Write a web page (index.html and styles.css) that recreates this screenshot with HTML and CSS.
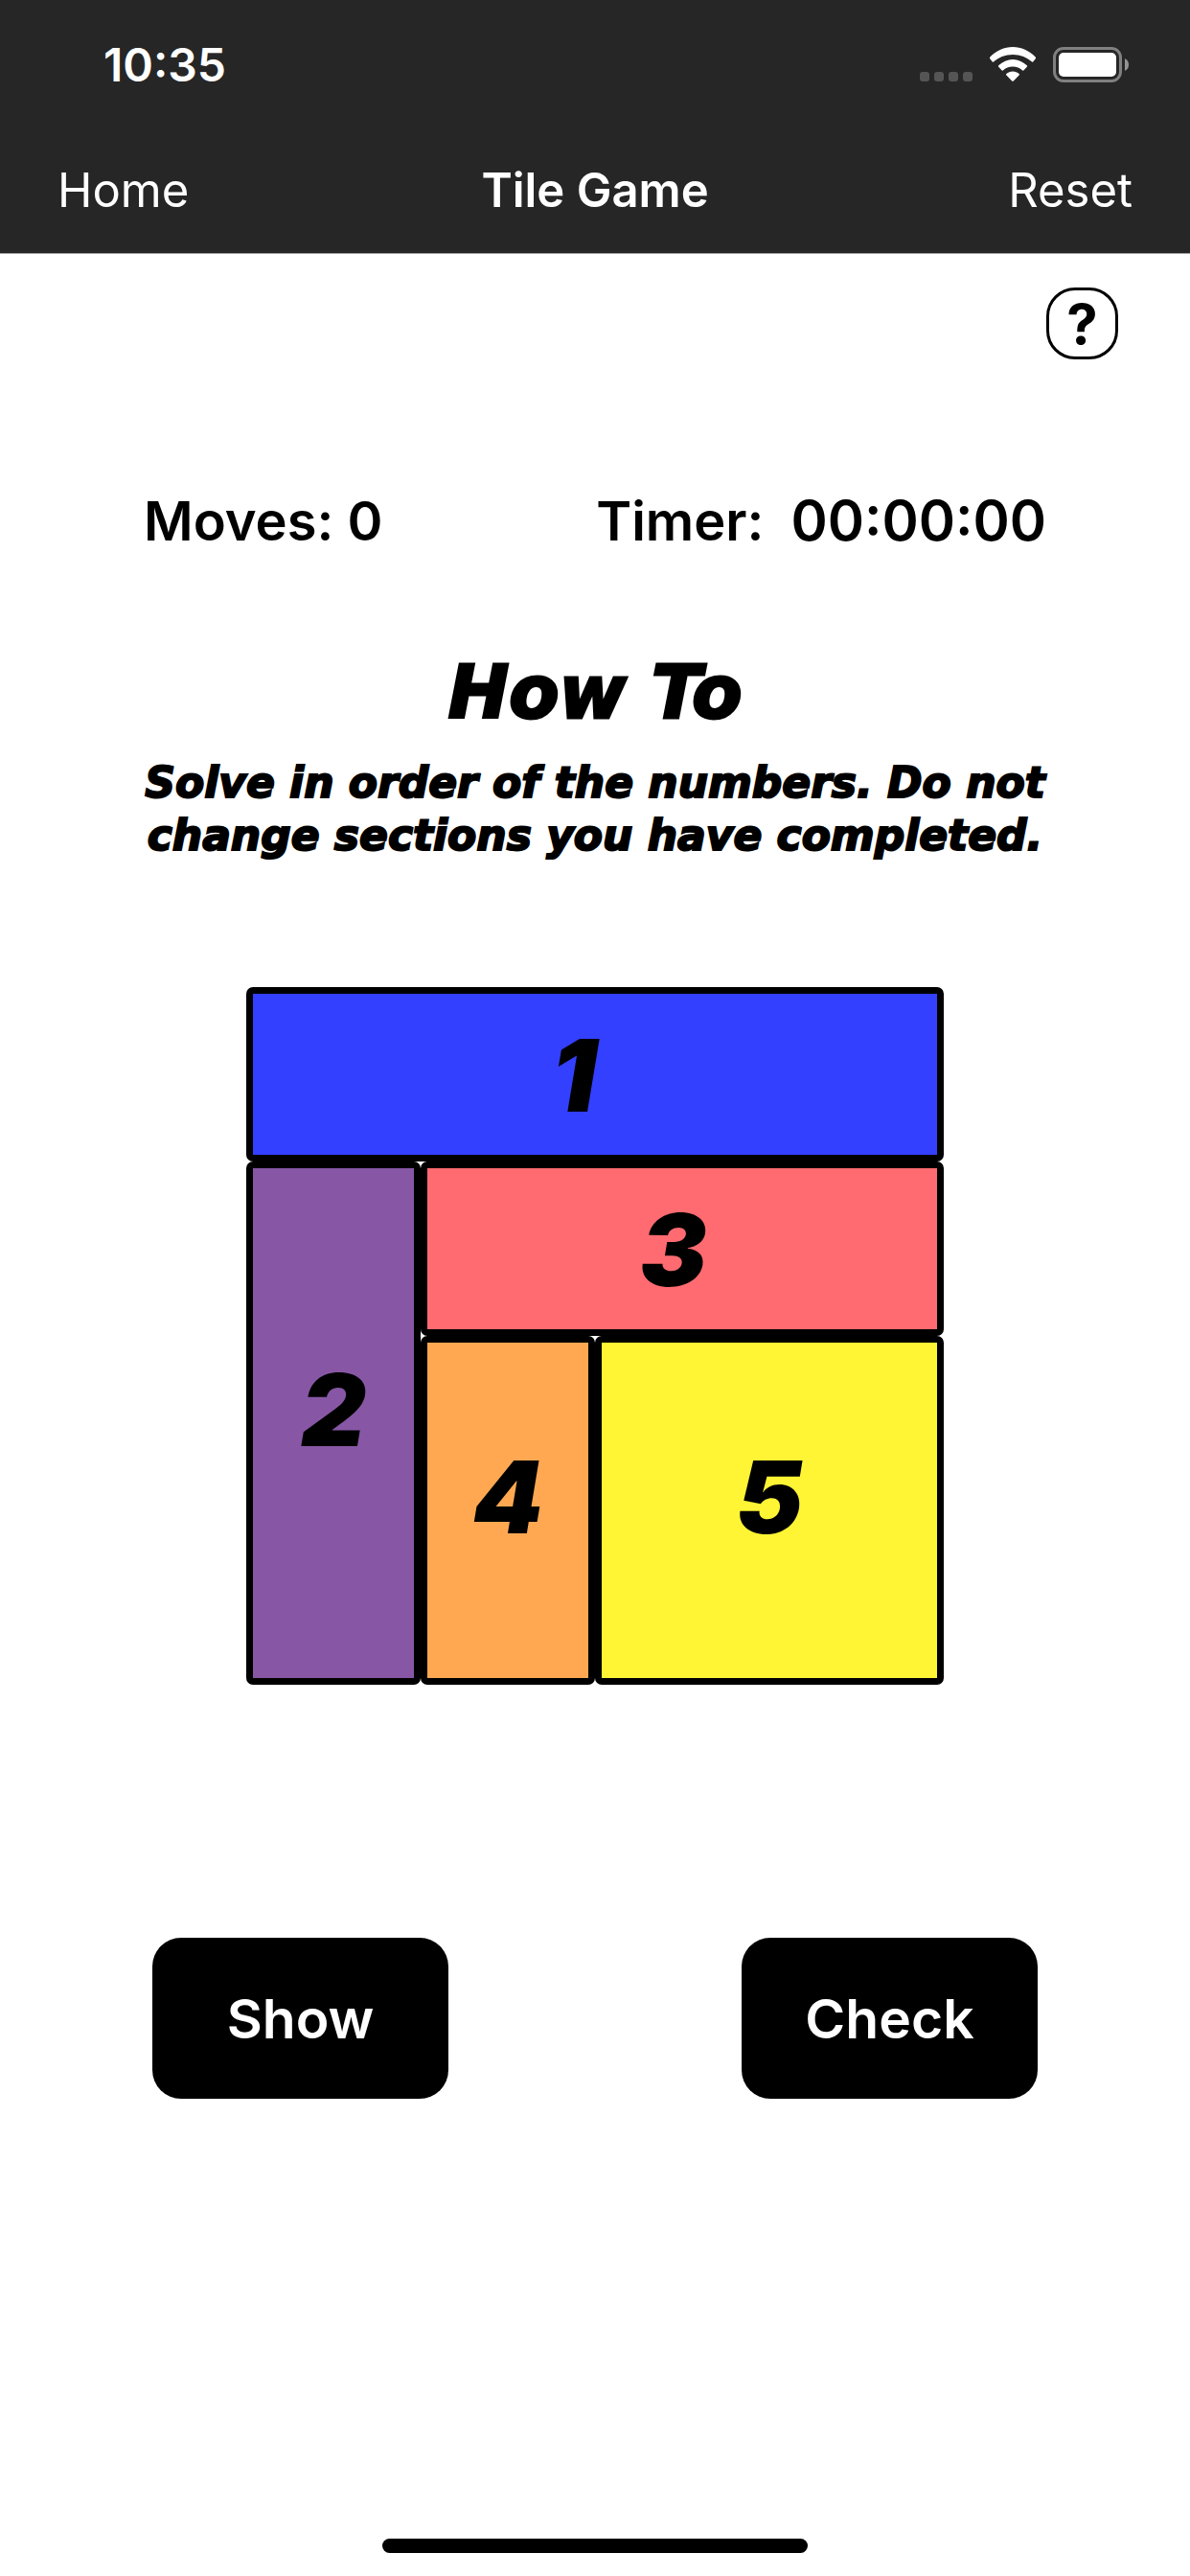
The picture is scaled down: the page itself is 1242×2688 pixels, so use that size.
FILE: index.html
```html
<!DOCTYPE html>
<html lang="en">
<head>
  <meta charset="utf-8">
  <meta name="viewport" content="width=device-width, initial-scale=1">
  <title>Tile Game</title>
  <link rel="stylesheet" href="styles.css">
</head>
<body class="app">
  <header class="top">
    <div class="status">
      <time class="status__time">10:35</time>
      <div class="status__icons">
        <svg width="55" height="36" viewBox="0 0 55 36" fill="#555" aria-hidden="true">
          <rect x="0" y="26" width="10" height="10" rx="3"/>
          <rect x="15" y="26" width="10" height="10" rx="3"/>
          <rect x="30" y="26" width="10" height="10" rx="3"/>
          <rect x="45" y="26" width="10" height="10" rx="3"/>
        </svg>
        <svg width="50" height="36" viewBox="0 0 50 36" fill="#fff" aria-hidden="true">
          <path d="M25 8 C33 8 40 11 45 15.600 Q45.600 16 46.200 15.400 L48.800 12.200 Q49.400 11.200 48.700 10.500 C42 3.800 34 0 25 0 S8 3.800 1.300 10.500 Q.6 11.200 1.200 12.200 L3.800 15.400 Q4.400 16 5 15.600 C10 11 17 8 25 8Z"/>
          <path d="M25 20.500 C29 20.500 32.500 22 35.200 24.500 Q36 25 36.600 24.300 L39.800 20.800 Q40.500 20 39.800 19.300 C35.500 15.300 30.500 13 25 13 S14.500 15.300 10.200 19.300 Q9.500 20 10.200 20.800 L13.400 24.300 Q14 25 14.800 24.500 C17.500 22 21 20.500 25 20.500Z"/>
          <path d="M25 25.500 C27.700 25.500 29.800 26.400 31.600 27.900 Q32.300 28.600 31.600 29.400 L25.800 35.500 Q25 36.200 24.200 35.500 L18.400 29.400 Q17.700 28.600 18.400 27.900 C20.200 26.400 22.300 25.500 25 25.500Z"/>
        </svg>
        <svg width="80" height="37" viewBox="0 0 80 37" aria-hidden="true">
          <rect x="1.500" y="1.500" width="69" height="34" rx="9.500" fill="none" stroke="#808080" stroke-width="3"/>
          <rect x="6" y="6" width="60" height="25" rx="5" fill="#fff"/>
          <path d="M75 12 Q79 14 79 18.500 T75 25Z" fill="#949494"/>
        </svg>
      </div>
    </div>
    <nav class="nav">
      <a class="nav__link" href="#home">Home</a>
      <h1 class="nav__title">Tile Game</h1>
      <button class="nav__link nav__link--end" type="button">Reset</button>
    </nav>
  </header>

  <main class="game">
    <button class="help" type="button" aria-label="Help">?</button>

    <div class="stats">
      <span>Moves: 0</span>
      <span class="timer"><span>Timer:</span><span class="timer__clock">00:00:00</span></span>
    </div>

    <section class="guide">
      <h2 class="guide__title">How To</h2>
      <p class="guide__text">Solve in order of the numbers. Do not<br>change sections you have completed.</p>
      <div class="board">
        <div class="tile tile--one">1</div>
        <div class="tile tile--two">2</div>
        <div class="tile tile--three">3</div>
        <div class="tile tile--four">4</div>
        <div class="tile tile--five">5</div>
      </div>
    </section>

    <div class="actions">
      <button class="action" type="button">Show</button>
      <button class="action" type="button">Check</button>
    </div>
  </main>

  <footer class="home-bar"><div class="home-bar__pill"></div></footer>
</body>
</html>
```
FILE: styles.css
```css
*,
*::before,
*::after {
  box-sizing: border-box;
}

.app {
  display: flex;
  flex-direction: column;
  min-height: 100vh;
  margin: 0;
  background: #fff;
  color: #000;
  font-family: Inter, "Liberation Sans", sans-serif;
}

button {
  padding: 0;
  border: 0;
  background: none;
  color: inherit;
  font: inherit;
}

/* Header */
.top {
  border-bottom: 1px solid #a0a0a0;
  background: #262626;
  color: #fff;
}

.status {
  display: flex;
  align-items: center;
  justify-content: space-between;
  height: 132px;
  padding: 2px 63px 0 108px;
}

.status__time {
  font-size: 48px;
  font-weight: 600;
}

.status__icons {
  display: flex;
  align-items: flex-start;
  gap: 17px;
}

.nav {
  display: grid;
  grid-template-columns: 1fr auto 1fr;
  align-items: center;
  height: 132px;
  padding: 0 60px;
}

.nav__link {
  justify-self: start;
  color: #fff;
  font-size: 49px;
  font-weight: 400;
  text-decoration: none;
}

.nav__link--end {
  justify-self: end;
}

.nav__title {
  margin: 0;
  font-size: 49px;
  font-weight: 600;
}

/* Game */
.game {
  display: flex;
  flex-direction: column;
  padding: 35px 75px 0;
}

.help {
  align-self: flex-end;
  width: 75px;
  height: 75px;
  border: 3px solid #000;
  border-radius: 30px;
  font-size: 58px;
  font-weight: 700;
  line-height: 1;
}

.stats {
  display: flex;
  align-items: baseline;
  justify-content: space-between;
  height: 72px;
  margin: 132px 75px 0;
  font-size: 56px;
  font-weight: 600;
  line-height: 72px;
}

.timer {
  display: flex;
  align-items: baseline;
  gap: 28px;
}

.timer__clock {
  font-size: 58px;
}

.guide {
  font-style: italic;
  font-weight: 900;
  text-align: center;
}

.guide__title,
.guide__text {
  font-family: "DejaVu Sans", Inter, sans-serif;
}

.guide__title {
  margin: 102px 0 24px;
  font-size: 76px;
  font-weight: 900;
  line-height: 84px;
  -webkit-text-stroke: 3px #000;
}

.guide__text {
  margin: 0;
  font-size: 44px;
  line-height: 55px;
  -webkit-text-stroke: 2px #000;
}

.board {
  display: grid;
  grid-template-columns: repeat(4, 1fr);
  grid-template-rows: repeat(4, 1fr);
  grid-template-areas:
    "one one one one"
    "two three three three"
    "two four five five"
    "two four five five";
  width: 100%;
  max-width: 728px;
  aspect-ratio: 1;
  margin: 131px auto 0;
}

.tile {
  display: flex;
  align-items: center;
  justify-content: center;
  border: 7px solid #000;
  border-radius: 7px;
  font-size: 105px;
  line-height: 1;
}

.tile--one {
  grid-area: one;
  padding-right: 44px;
  background: #3340ff;
}

.tile--two {
  grid-area: two;
  padding-bottom: 30px;
  background: #8757a5;
}

.tile--three {
  grid-area: three;
  padding-right: 18px;
  background: #ff6b70;
}

.tile--four {
  grid-area: four;
  padding-bottom: 30px;
  background: #ffa851;
}

.tile--five {
  grid-area: five;
  padding-bottom: 30px;
  background: #fff534;
}

.actions {
  display: flex;
  justify-content: space-between;
  margin: 264px 84px 0;
}

.action {
  width: 309px;
  height: 168px;
  border-radius: 30px;
  background: #000;
  color: #fff;
  font-size: 57px;
  font-weight: 600;
}

.home-bar {
  display: flex;
  justify-content: center;
  margin-top: auto;
  padding: 24px;
}

.home-bar__pill {
  width: 444px;
  height: 15px;
  border-radius: 8px;
  background: #000;
}
```
